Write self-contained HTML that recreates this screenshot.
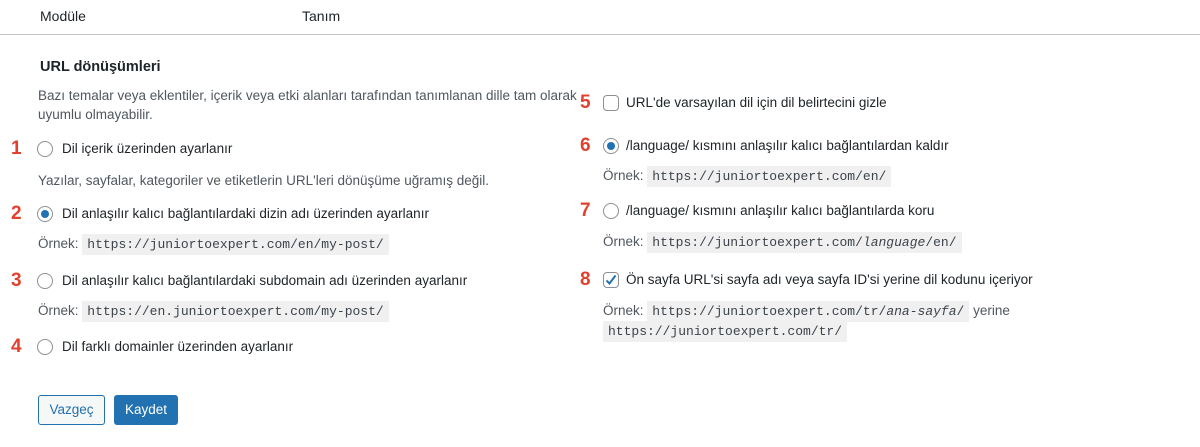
<!DOCTYPE html>
<html><head><meta charset="utf-8"><style>
*{margin:0;padding:0;box-sizing:border-box}
body{width:1200px;height:447px;background:#fff;position:relative;overflow:hidden;font-family:"Liberation Sans",sans-serif;font-size:13.5px;color:#1d2327}
.a{position:absolute;white-space:nowrap;line-height:18px}
.n{position:absolute;color:#e2412f;font-size:19px;font-weight:bold;line-height:20px}
.r{position:absolute;width:16px;height:16px;border:1px solid #8c8f94;border-radius:50%;background:#fff}
.r.on:after{content:"";position:absolute;left:3px;top:3px;width:8px;height:8px;border-radius:50%;background:#2271b1}
.c{position:absolute;width:16px;height:16px;border:1px solid #8c8f94;border-radius:4px;background:#fff}
.g{color:#50575e}
code{font-family:"Liberation Mono",monospace;font-size:13px;background:#f0f0f1;padding:3px 5px;color:#3c434a}
.btn{position:absolute;height:30px;border-radius:3px;font-size:13.5px;line-height:28px;text-align:center}
</style></head><body>
<div class="a" style="left:40px;top:7px;font-size:14px">Modüle</div>
<div class="a" style="left:302px;top:7px;font-size:14px">Tanım</div>
<div style="position:absolute;left:0;top:34px;width:1200px;height:1px;background:#c3c4c7"></div>
<div class="a" style="left:40px;top:58px;font-size:14.5px;font-weight:bold">URL dönüşümleri</div>
<div class="a g" style="left:38px;top:87px">Bazı temalar veya eklentiler, içerik veya etki alanları tarafından tanımlanan dille tam olarak</div>
<div class="a g" style="left:38px;top:106px">uyumlu olmayabilir.</div>

<div class="n" style="left:11px;top:139px">1</div><div class="r" style="left:37px;top:141px"></div>
<div class="a" style="left:62px;top:140px">Dil içerik üzerinden ayarlanır</div>
<div class="a g" style="left:38px;top:172px">Yazılar, sayfalar, kategoriler ve etiketlerin URL'leri dönüşüme uğramış değil.</div>

<div class="n" style="left:11px;top:204px">2</div><div class="r on" style="left:37px;top:206px"></div>
<div class="a" style="left:62px;top:205px">Dil anlaşılır kalıcı bağlantılardaki dizin adı üzerinden ayarlanır</div>
<div class="a g" style="left:38px;top:235px">Örnek: <code>https://juniortoexpert.com/en/my-post/</code></div>

<div class="n" style="left:11px;top:271px">3</div><div class="r" style="left:37px;top:273px"></div>
<div class="a" style="left:62px;top:272px">Dil anlaşılır kalıcı bağlantılardaki subdomain adı üzerinden ayarlanır</div>
<div class="a g" style="left:38px;top:302px">Örnek: <code>https://en.juniortoexpert.com/my-post/</code></div>

<div class="n" style="left:11px;top:337px">4</div><div class="r" style="left:37px;top:339px"></div>
<div class="a" style="left:62px;top:338px">Dil farklı domainler üzerinden ayarlanır</div>

<div class="btn" style="left:38px;top:395px;width:67px;border:1px solid #2271b1;color:#2271b1;background:#f6f7f7">Vazgeç</div>
<div class="btn" style="left:114px;top:395px;width:64px;border:1px solid #2271b1;color:#fff;background:#2271b1">Kaydet</div>

<div class="n" style="left:580px;top:93px">5</div><div class="c" style="left:603px;top:95px"></div>
<div class="a" style="left:626px;top:94px">URL'de varsayılan dil için dil belirtecini gizle</div>

<div class="n" style="left:580px;top:136px">6</div><div class="r on" style="left:603px;top:138px"></div>
<div class="a" style="left:626px;top:137px">/language/ kısmını anlaşılır kalıcı bağlantılardan kaldır</div>
<div class="a g" style="left:603px;top:167px">Örnek: <code>https://juniortoexpert.com/en/</code></div>

<div class="n" style="left:580px;top:201px">7</div><div class="r" style="left:603px;top:203px"></div>
<div class="a" style="left:626px;top:202px">/language/ kısmını anlaşılır kalıcı bağlantılarda koru</div>
<div class="a g" style="left:603px;top:233px">Örnek: <code>https://juniortoexpert.com/<i>language</i>/en/</code></div>

<div class="n" style="left:580px;top:270px">8</div><div class="c" style="left:603px;top:272px"><svg width="16" height="16" style="position:absolute;left:-1px;top:-1px"><path d="M3.5 8.5 L6.5 11.5 L12.5 3.5" stroke="#2271b1" stroke-width="2" fill="none"/></svg></div>
<div class="a" style="left:626px;top:271px">Ön sayfa URL'si sayfa adı veya sayfa ID'si yerine dil kodunu içeriyor</div>
<div class="a g" style="left:603px;top:302px">Örnek: <code>https://juniortoexpert.com/tr/<i>ana-sayfa</i>/</code> yerine</div>
<div class="a g" style="left:603px;top:322px"><code>https://juniortoexpert.com/tr/</code></div>
</body></html>
